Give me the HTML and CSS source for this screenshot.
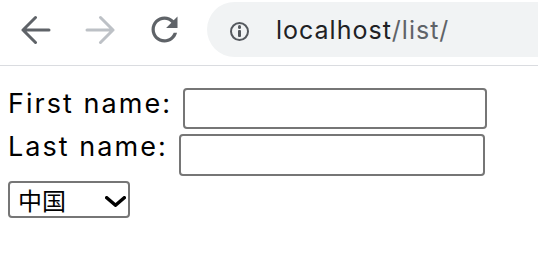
FILE: index.html
```html
<!DOCTYPE html>
<html lang="zh-CN">
<head>
<meta charset="utf-8">
<title>localhost/list/</title>
<link rel="stylesheet" href="styles.css">
</head>
<body>
<header class="toolbar">
  <button class="nav-btn" aria-label="Back">
    <svg class="icon" width="30" height="30" viewBox="0 0 30 30"><path d="M28 15H2M14.5 2.5L2 15l12.5 12.5" fill="none" stroke="currentColor" stroke-width="3" stroke-linecap="round" stroke-linejoin="round"/></svg>
  </button>
  <button class="nav-btn nav-btn--disabled" aria-label="Forward">
    <svg class="icon" width="30" height="30" viewBox="0 0 30 30"><path d="M2 15h26M15.5 2.5L28 15 15.5 27.5" fill="none" stroke="currentColor" stroke-width="3" stroke-linecap="round" stroke-linejoin="round"/></svg>
  </button>
  <button class="nav-btn" aria-label="Reload">
    <svg class="icon" width="39" height="39" viewBox="0 0 24 24"><path fill="currentColor" d="M17.65 6.35C16.2 4.9 14.21 4 12 4c-4.42 0-7.99 3.58-7.99 8s3.57 8 7.99 8c3.73 0 6.84-2.55 7.73-6h-2.08c-.82 2.33-3.04 4-5.65 4-3.31 0-6-2.69-6-6s2.69-6 6-6c1.66 0 3.14.69 4.22 1.78L13 11h7V4l-2.35 2.35z"/></svg>
  </button>
  <div class="omnibox">
    <span class="info-icon" aria-label="View site information"><span class="info-dot"></span><span class="info-bar"></span></span>
    <span class="url"><span class="url-host">localhost</span><span class="url-path">/list/</span></span>
  </div>
</header>
<main class="page">
  <form class="form">
    <div class="row row--first">
      <span class="label">First name:</span>
      <input class="field field--first" type="text" name="fname">
    </div>
    <div class="row row--last">
      <span class="label">Last name:</span>
      <input class="field field--last" type="text" name="lname">
    </div>
    <div class="row row--select">
      <span class="select-wrap">
        <select class="select" name="country">
          <option>中国</option>
          <option>美国</option>
        </select>
        <svg class="chevron" width="21" height="11" viewBox="0 0 21 11"><path d="M1.75 1.75L10.5 9.25 19.25 1.75" fill="none" stroke="#000" stroke-width="3.5" stroke-linecap="round" stroke-linejoin="round"/></svg>
      </span>
    </div>
  </form>
</main>
</body>
</html>
```

FILE: styles.css
```css
* { box-sizing: border-box; }

html, body {
  margin: 0;
  padding: 0;
  background: #fff;
}

body {
  font-family: Inter, "Liberation Sans", "Noto Sans CJK SC", sans-serif;
  color: #000;
  overflow: hidden;
}

.toolbar {
  display: flex;
  align-items: center;
  height: 66px;
  padding: 2px 0 8px 4px;
  border-bottom: 1px solid #dadce0;
  background: #fff;
}

.nav-btn {
  display: flex;
  align-items: center;
  justify-content: center;
  width: 64px;
  height: 55px;
  padding: 0;
  border: 0;
  background: transparent;
  color: #5f6368;
}

.nav-btn--disabled {
  color: #bdc1c6;
}

.icon {
  display: block;
}

.omnibox {
  display: flex;
  align-items: center;
  flex: 1;
  height: 55px;
  margin-left: 11px;
  border-radius: 28px 0 0 28px;
  background: #f1f3f4;
  color: #5f6368;
}

.info-icon {
  display: flex;
  flex-direction: column;
  align-items: center;
  justify-content: center;
  gap: 1.5px;
  flex: none;
  width: 19px;
  height: 19px;
  margin: 3px 0 0 23px;
  border: 2.6px solid #55595e;
  border-radius: 50%;
}

.info-dot {
  width: 3.2px;
  height: 3.2px;
  border-radius: 50%;
  background: #55595e;
}

.info-bar {
  width: 2.8px;
  height: 6.5px;
  border-radius: 1px;
  background: #55595e;
}

.url {
  margin-left: 27px;
  font-size: 25px;
  letter-spacing: 1px;
  white-space: nowrap;
}

.url-host {
  color: #202124;
}

.url-path {
  color: #5f6368;
}

.page {
  padding: 0 8px;
}

.form {
  margin: 0;
}

.row {
  display: flex;
  align-items: flex-start;
}

.row--first {
  margin-top: 22px;
}

.row--last {
  margin-top: 5px;
}

.row--select {
  margin-top: 5px;
}

.label {
  font-size: 27px;
  line-height: 31px;
  letter-spacing: 2.05px;
  white-space: nowrap;
  margin-right: 11px;
}

.row--first .label {
  margin-top: 0;
}

.row--last .label {
  margin-top: -3px;
}

.field {
  height: 41px;
  margin: 0;
  padding: 0 6px;
  border: 2px solid #767676;
  border-radius: 4px;
  background: #fff;
  font-size: 16px;
}

.field--first {
  width: 304px;
}

.field--last {
  width: 306px;
  height: 42px;
}

.select-wrap {
  position: relative;
  display: inline-flex;
}

.select {
  appearance: none;
  -webkit-appearance: none;
  width: 122px;
  height: 37px;
  margin: 0;
  padding: 0 0 0 8px;
  border: 2px solid #767676;
  border-radius: 4px;
  background: #fff;
  color: #000;
  font-family: "Noto Sans CJK SC", sans-serif;
  font-size: 24px;
  line-height: 33px;
}

.chevron {
  position: absolute;
  right: 4px;
  top: 15px;
  pointer-events: none;
}
```
